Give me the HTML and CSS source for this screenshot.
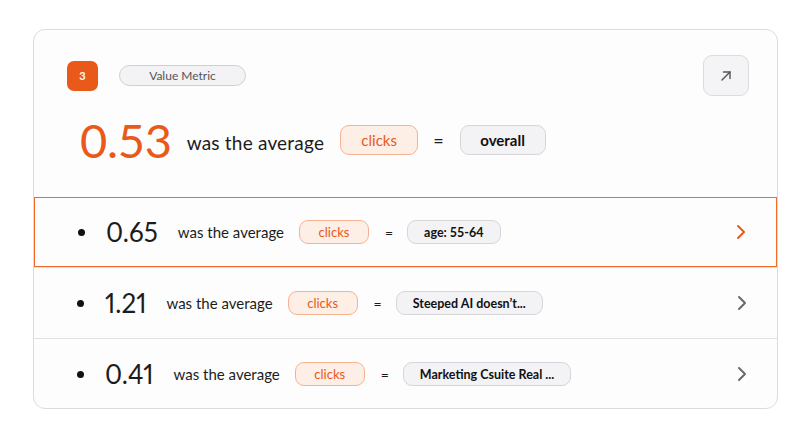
FILE: index.html
```html
<!DOCTYPE html>
<html lang="en">
<head>
    <meta charset="UTF-8">
    <meta name="viewport" content="width=device-width, initial-scale=1.0">
    <title>Value Metric</title>
    <link rel="stylesheet" href="styles.css">
</head>
<body>
    <div class="metric-card">
        <!-- Header -->
        <div class="metric-head">
            <div class="head-top">
                <span class="step-badge">3</span>
                <span class="type-pill">Value Metric</span>
                <button class="open-btn" aria-label="Open">
                    <svg width="14" height="14" viewBox="0 0 14 14" fill="none" stroke="#555" stroke-width="1.4" stroke-linecap="round" stroke-linejoin="round">
                        <path d="M3 11L11 3"/>
                        <path d="M4.5 3H11V9.5"/>
                    </svg>
                </button>
            </div>
            <div class="head-main">
                <span class="big-value">0.53</span>
                <span class="phrase">was the average</span>
                <span class="pill pill-metric">clicks</span>
                <span class="equals">=</span>
                <span class="pill pill-segment">overall</span>
            </div>
        </div>

        <!-- Breakdown rows -->
        <div class="row active">
            <span class="dot"></span>
            <span class="row-value">0.65</span>
            <span class="phrase">was the average</span>
            <span class="pill pill-metric">clicks</span>
            <span class="equals">=</span>
            <span class="pill pill-segment">age: 55-64</span>
            <span class="chevron">
                <svg width="10" height="16" viewBox="0 0 10 16" fill="none" stroke="currentColor" stroke-width="2" stroke-linecap="round" stroke-linejoin="round"><path d="M2 2L8 8L2 14"/></svg>
            </span>
        </div>
        <div class="row">
            <span class="dot"></span>
            <span class="row-value">1.21</span>
            <span class="phrase">was the average</span>
            <span class="pill pill-metric">clicks</span>
            <span class="equals">=</span>
            <span class="pill pill-segment">Steeped AI doesn’t...</span>
            <span class="chevron">
                <svg width="10" height="16" viewBox="0 0 10 16" fill="none" stroke="currentColor" stroke-width="2" stroke-linecap="round" stroke-linejoin="round"><path d="M2 2L8 8L2 14"/></svg>
            </span>
        </div>
        <div class="row">
            <span class="dot"></span>
            <span class="row-value">0.41</span>
            <span class="phrase">was the average</span>
            <span class="pill pill-metric">clicks</span>
            <span class="equals">=</span>
            <span class="pill pill-segment">Marketing Csuite Real ...</span>
            <span class="chevron">
                <svg width="10" height="16" viewBox="0 0 10 16" fill="none" stroke="currentColor" stroke-width="2" stroke-linecap="round" stroke-linejoin="round"><path d="M2 2L8 8L2 14"/></svg>
            </span>
        </div>
    </div>
</body>
</html>
```

FILE: styles.css
```css
/* Global */
* {
    box-sizing: border-box;
    margin: 0;
    padding: 0;
}
body {
    background-color: #fff;
    font-family: Lato, "Open Sans", sans-serif;
    color: #1c1c1c;
    padding: 29px 22px 0 33px;
}

/* Card */
.metric-card {
    border: 1px solid #dcdcdc;
    border-radius: 12px;
    background: #fdfdfd;
    height: 380px;
    overflow: hidden;
}

/* Header */
.metric-head {
    height: 167px;
    padding: 25px 28px 0 33px;
}
.head-top {
    display: flex;
    align-items: center;
}
.step-badge {
    width: 31px;
    height: 30px;
    border-radius: 7px;
    background-color: #e8591a;
    color: #fff;
    font-size: 11px;
    font-weight: bold;
    display: flex;
    justify-content: center;
    align-items: center;
}
.type-pill {
    margin-left: 21px;
    width: 127px;
    height: 21px;
    border: 1px solid #cfcfd3;
    border-radius: 11px;
    background: #f3f2f5;
    color: #555;
    font-size: 12px;
    display: flex;
    justify-content: center;
    align-items: center;
}
.open-btn {
    margin-left: auto;
    width: 46px;
    height: 41px;
    border: 1px solid #dcdbdf;
    border-radius: 9px;
    background: #f4f3f6;
    display: flex;
    justify-content: center;
    align-items: center;
}
.head-main {
    display: flex;
    align-items: center;
    margin-top: 15px;
    padding-left: 13px;
    height: 58px;
}
.big-value {
    font-size: 47px;
    color: #e8591a;
    margin-right: 15px;
    letter-spacing: -0.3px;
}
.head-main .phrase {
    font-size: 19px;
    margin-right: 16px;
    margin-top: 4px;
    letter-spacing: 0.2px;
}
.head-main .pill {
    height: 30px;
    border-radius: 9px;
    font-size: 15px;
}
.head-main .pill-metric {
    width: 78px;
}
.head-main .pill-segment {
    width: 86px;
    font-weight: bold;
}
.head-main .equals {
    font-size: 18px;
    margin: 0 16px 0 15px;
}

/* Pills */
.pill {
    display: flex;
    justify-content: center;
    align-items: center;
}
.pill-metric {
    border: 1px solid #f6b38f;
    background: #fdeee6;
    color: #e8591a;
}
.pill-segment {
    border: 1px solid #d6d5da;
    background: #f3f2f5;
    color: #111;
}

/* Rows */
.row {
    display: flex;
    align-items: center;
    height: 71px;
    padding: 0 30px 0 43px;
    border-top: 1px solid #e2e2e2;
}
.row.active {
    border: 1px solid #f06a2a;
    height: 70px;
}
.dot {
    width: 7px;
    height: 7px;
    border-radius: 50%;
    background: #111;
    margin-right: 21px;
}
.row-value {
    font-size: 26px;
    margin-right: 20px;
    font-variant-numeric: proportional-nums;
}
.row .phrase {
    font-size: 15px;
    margin-right: 15px;
}
.row .pill {
    height: 24px;
    border-radius: 9px;
    font-size: 13px;
}
.row .pill-metric {
    width: 70px;
}
.row .pill-segment {
    padding: 0 16px;
    font-weight: bold;
    font-size: 12.5px;
}
.row .equals {
    font-size: 14px;
    margin: 0 14px 0 16px;
}
.chevron {
    margin-left: auto;
    color: #6a6a6a;
    display: flex;
}
.row.active .chevron {
    color: #e8591a;
}
```
